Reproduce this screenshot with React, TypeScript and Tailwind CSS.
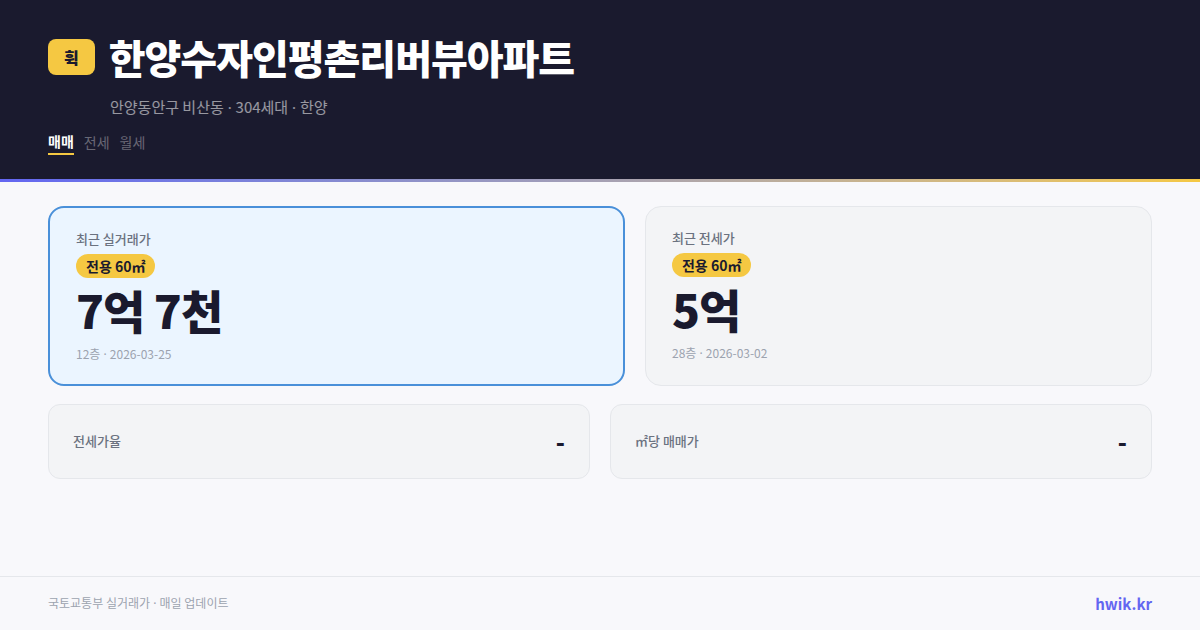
import { Fragment } from 'react';

type Deal = {
  label: string;
  area: string;
  price: string;
  details: string[];
};

const tabs = ['매매', '전세', '월세'];

const sale: Deal = {
  label: '최근 실거래가',
  area: '전용 60㎡',
  price: '7억 7천',
  details: ['12층', '2026-03-25'],
};

const jeonse: Deal = {
  label: '최근 전세가',
  area: '전용 60㎡',
  price: '5억',
  details: ['28층', '2026-03-02'],
};

const stats = [
  { label: '전세가율', value: '-' },
  { label: '㎡당 매매가', value: '-' },
];

// The CJK middle dot is too wide, so separators use the Latin font
function DotList({ items }: { items: string[] }) {
  return items.map((item, i) => (
    <Fragment key={item}>
      {i > 0 && <span className="font-['Noto_Sans',sans-serif]"> · </span>}
      {item}
    </Fragment>
  ));
}

function DealContent({ deal }: { deal: Deal }) {
  return (
    <>
      <h2 className="text-[13px] leading-5 font-medium text-[#6b7280]">{deal.label}</h2>
      <span className="mt-[5px] rounded-full bg-[#f5c842] px-2.5 text-sm leading-6 font-bold">{deal.area}</span>
      <p className="mt-1 text-[46px] leading-[54px] font-black tracking-[-1px]">{deal.price}</p>
      <p className="mt-2.5 text-xs leading-4 text-[#9ca3af]">
        <DotList items={deal.details} />
      </p>
    </>
  );
}

function App() {
  return (
    <div className="flex min-h-screen flex-col bg-[#f8f8fb] font-['Noto_Sans_CJK_KR',sans-serif] text-[#1a1a2e]">
      <header className="bg-[#1a1a2e] px-12 pt-8 pb-6 text-white">
        <div className="flex items-center gap-3.5">
          <span className="rounded-lg bg-[#f5c842] px-4 text-base leading-9 font-black text-[#1a1a2e]">휙</span>
          <h1 className="text-[40px] leading-[50px] font-black tracking-[-1px]">한양수자인평촌리버뷰아파트</h1>
        </div>
        <p className="mt-[13px] pl-[62px] text-[15px] leading-6 text-white/55">
          <DotList items={['안양동안구 비산동', '304세대', '한양']} />
        </p>
        <nav className="mt-[11px] flex items-start gap-2.5 text-sm leading-6">
          {tabs.map((tab, i) => (
            <a
              key={tab}
              href="#"
              className={i === 0 ? 'border-b-2 border-[#f5c842] leading-[23px] font-bold' : 'text-white/35'}
            >
              {tab}
            </a>
          ))}
        </nav>
      </header>
      <div className="h-[3px] bg-linear-to-r from-[#6366f1] to-[#f5c842]" />

      <main className="flex flex-1 flex-col gap-[18px] px-12 py-6">
        <div className="flex gap-5">
          <section className="flex flex-[1.15] flex-col items-start rounded-2xl border-2 border-[#4a90d9] bg-[#ebf5ff] px-[26px] py-[21px]">
            <DealContent deal={sale} />
          </section>
          <section className="flex flex-1 flex-col items-start rounded-2xl border border-[#e5e7eb] bg-[#f3f4f6] px-[26px] py-[21px]">
            <DealContent deal={jeonse} />
          </section>
        </div>

        <dl className="grid grid-cols-2 gap-5">
          {stats.map((stat) => (
            <div
              key={stat.label}
              className="flex items-center justify-between rounded-xl border border-[#e5e7eb] bg-[#f3f4f6] px-6 pt-[19px] pb-[21px]"
            >
              <dt className="text-[13px] font-medium text-[#6b7280]">{stat.label}</dt>
              <dd className="text-2xl leading-[33px] font-black">{stat.value}</dd>
            </div>
          ))}
        </dl>
      </main>

      <footer className="flex items-center justify-between border-t border-[#e5e7eb] px-12 py-[15px]">
        <p className="text-xs leading-5 text-[#9ca3af]">
          <DotList items={['국토교통부 실거래가', '매일 업데이트']} />
        </p>
        <a href="https://hwik.kr" className="text-[15px] leading-[23px] font-bold text-[#6366f1]">
          hwik.kr
        </a>
      </footer>
    </div>
  );
}

export default App;
